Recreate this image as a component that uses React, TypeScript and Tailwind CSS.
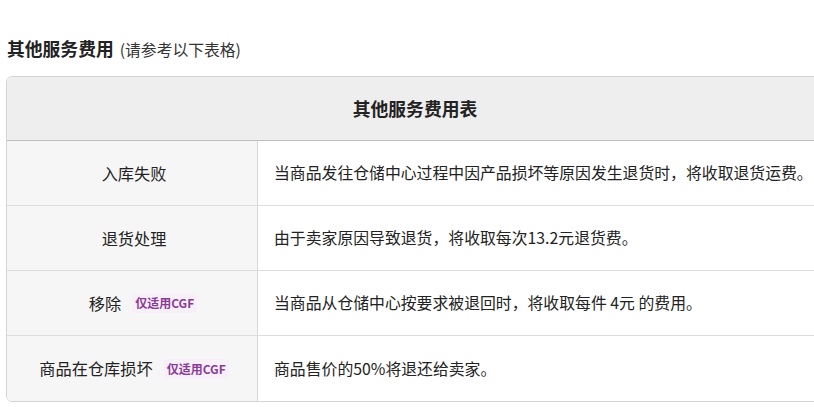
const rows = [
  { name: '入库失败', desc: '当商品发往仓储中心过程中因产品损坏等原因发生退货时，将收取退货运费。' },
  { name: '退货处理', desc: '由于卖家原因导致退货，将收取每次13.2元退货费。' },
  { name: '移除', badge: true, desc: '当商品从仓储中心按要求被退回时，将收取每件 4元 的费用。', shift: true },
  { name: '商品在仓库损坏', badge: true, desc: '商品售价的50%将退还给卖家。' },
];

function Badge() {
  return (
    <span className="ml-[11px] rounded-[3px] bg-[#f7f0f8] px-[3px] py-[1px] text-[12px] font-bold leading-[18px] text-[#8a3c98]">
      仅适用CGF
    </span>
  );
}

export default function App() {
  return (
    <div
      className="h-[407px] w-[814px] overflow-hidden bg-white text-[#222]"
      style={{ fontFamily: '"Noto Sans CJK SC", "Noto Sans", sans-serif' }}
    >
      {/* Title */}
      <div className="flex items-baseline pl-[7px] pt-[36px]">
        <span className="text-[17.8px] font-bold leading-[24px]">其他服务费用</span>
        <span className="ml-[6px] text-[15.8px] leading-[24px] text-[#333]">(请参考以下表格)</span>
      </div>

      {/* Table */}
      <div className="ml-[6px] mt-[14px] w-[818px] overflow-hidden rounded-[6px] border border-[#d4d4d4]">
        <div className="flex h-[64px] items-center justify-center border-b-[1.5px] border-[#bdbdbd] bg-[#eeeeee] text-[17.8px] font-bold">
          其他服务费用表
        </div>
        {rows.map((r, i) => (
          <div
            key={r.name}
            className={`flex h-[65px] ${i < rows.length - 1 ? 'border-b border-[#dddddd]' : ''}`}
          >
            <div
              className={`flex w-[251px] shrink-0 items-center justify-center border-r border-[#d8d8d8] bg-[#f6f6f6] text-[16.2px] ${r.shift ? 'pl-[22px]' : 'pl-[4px]'}`}
            >
              <span>{r.name}</span>
              {r.badge && <Badge />}
            </div>
            <div className="flex flex-1 items-center pl-[16px] text-[15.85px] whitespace-nowrap">{r.desc}</div>
          </div>
        ))}
      </div>
    </div>
  );
}
